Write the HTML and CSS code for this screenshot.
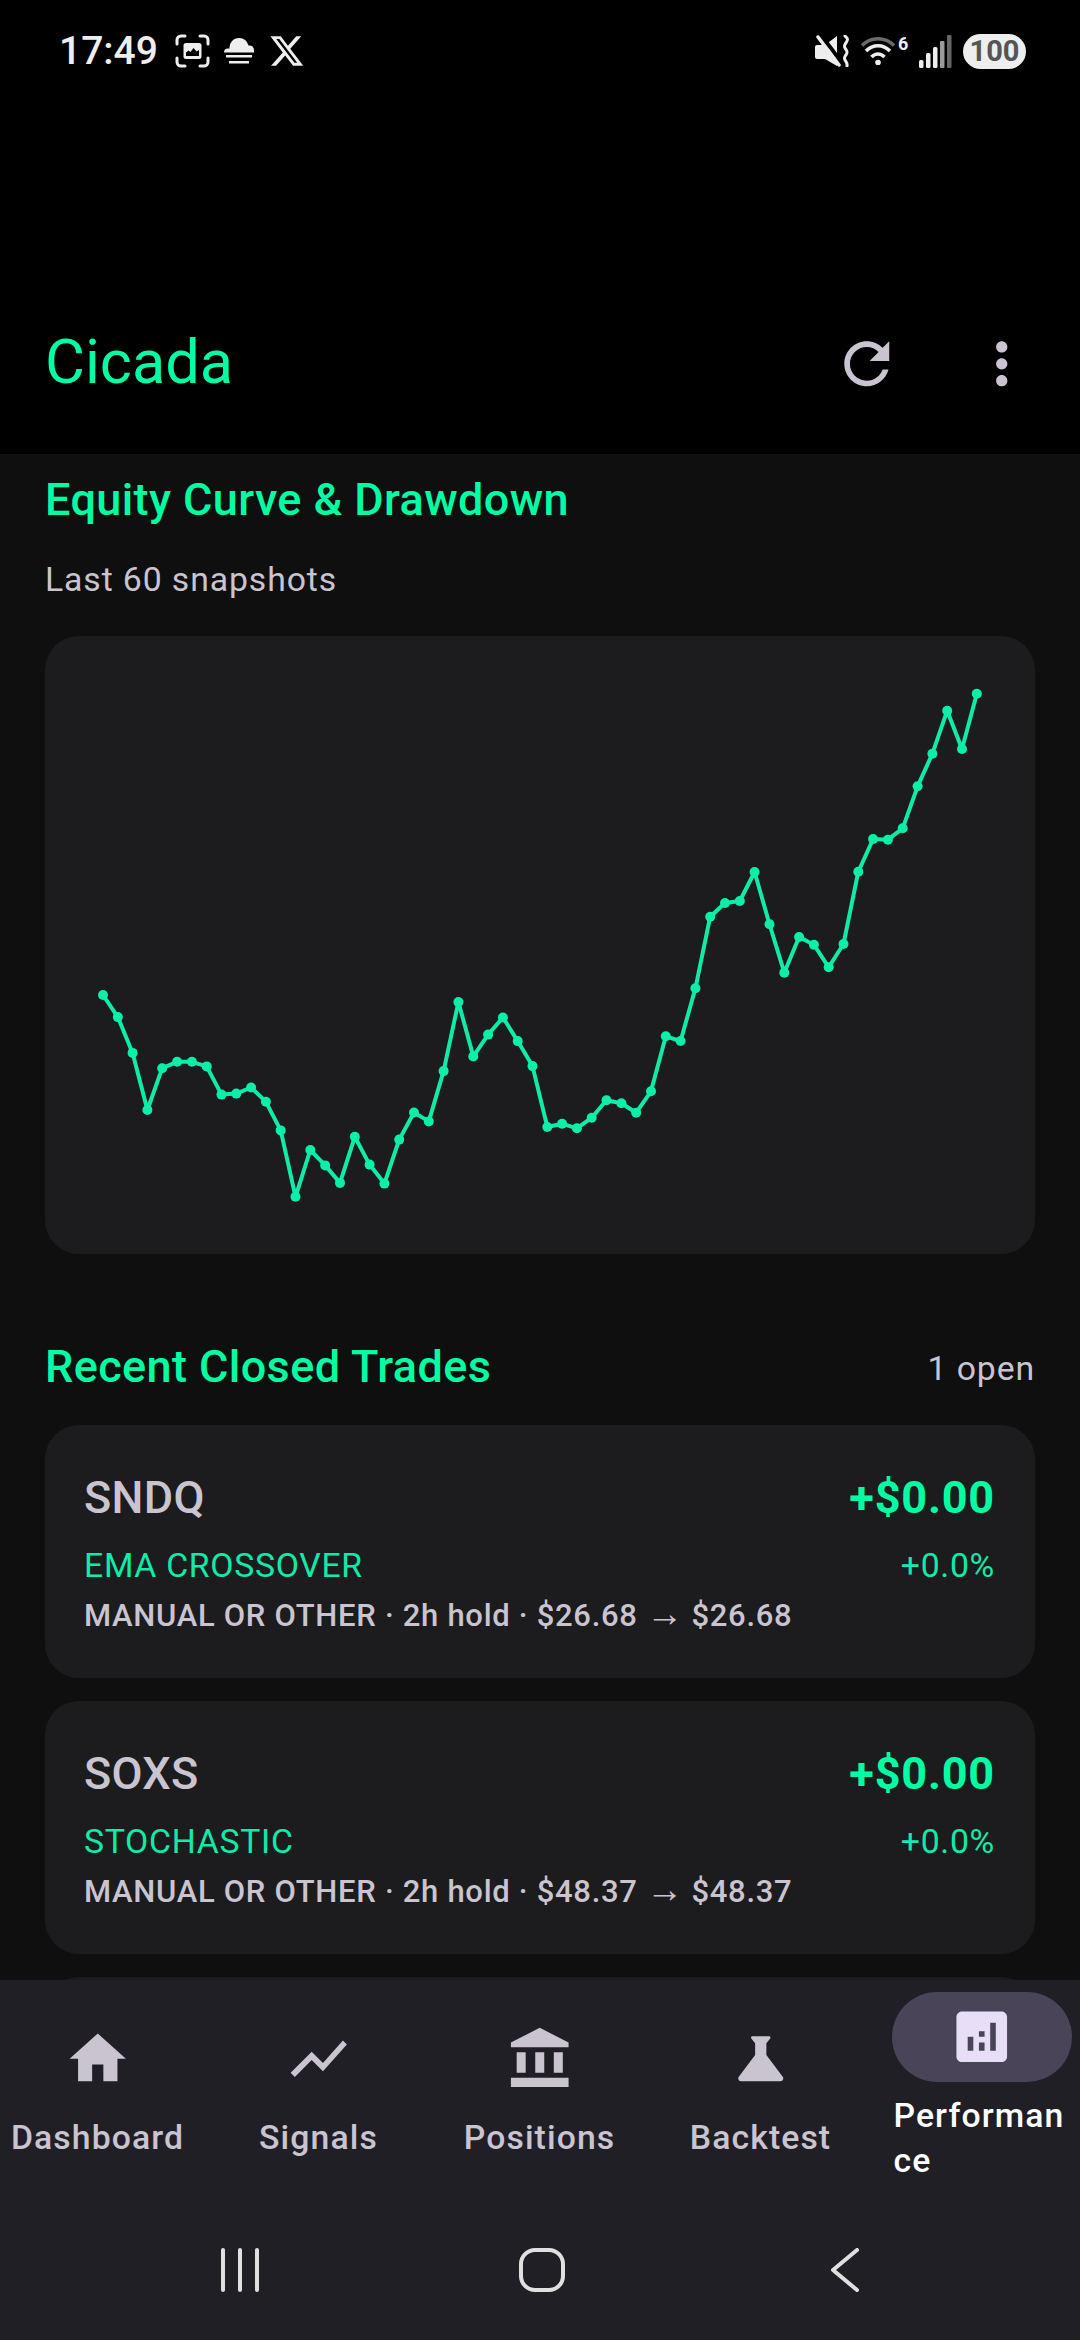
FILE: index.html
```html
<!DOCTYPE html>
<html lang="en">
<head>
<meta charset="utf-8">
<title>Cicada</title>
<link rel="stylesheet" href="styles.css">
</head>
<body>
<div class="app">
  <header class="top">
    <div class="status">
      <div class="status-left">
        <span class="time">17:49</span>
        <svg class="st-shot" viewBox="0 0 35 34"><path class="st-line" d="M2 10V6a4 4 0 0 1 4-4h4M25 2h4a4 4 0 0 1 4 4v4M33 24v4a4 4 0 0 1-4 4h-4M10 32H6a4 4 0 0 1-4-4v-4"/><path class="st-fill" fill-rule="evenodd" d="M11 9h13a2.500 2.500 0 0 1 2.500 2.500v11a2.500 2.500 0 0 1-2.500 2.500H11a2.500 2.500 0 0 1-2.500-2.500v-11A2.500 2.500 0 0 1 11 9zm0 9.500v3.500h13v-6l-2.500 1.500-3-3.500-3 4-2-1.500z"/></svg>
        <svg class="st-cloud" viewBox="0 0 30 26"><path class="st-fill" d="M0 14.500a4 4 0 0 1 4-4h1.500A9.500 9.500 0 0 1 15 0a9.500 9.500 0 0 1 9.500 7.500h1A4.500 4.500 0 0 1 30 12v2.500z"/><path class="st-fill" d="M2 17h26v2.500H2zM5 23h20v2.500H5z"/></svg>
        <svg class="st-x" viewBox="1 2 23 20"><path class="st-fill" d="M18.244 2.250h3.308l-7.227 8.260 8.502 11.240H16.170l-5.214-6.817L4.990 21.750H1.680l7.730-8.835L1.254 2.250H8.080l4.713 6.231zm-1.161 17.520h1.833L7.084 4.126H5.117z"/></svg>
      </div>
      <div class="status-right">
        <svg class="st-mute" viewBox="0 0 35 32"><path class="st-fill" d="M2 10h8L22 1v30L10 24H2a2 2 0 0 1-2-2V12a2 2 0 0 1 2-2z"/><path class="st-gap" d="M6 0l21 28"/><path class="st-slash" d="M3 2l21 28"/><path class="st-wave" d="M30 1c3 2.500 3 3.500 1.500 6s-3 3.500-1.500 6 3 3.500 1.500 6-3 3.500-1.500 6 2.500 3 2 6"/></svg>
        <div class="wifi">
          <svg class="st-wifi" viewBox="0 0 34 28"><path class="wifi-dim" d="M1 8.500C10-.5 24-.5 33 8.500"/><path class="wifi-on" d="M5 14c7-7 17-7 24 0M10.500 20c4-4 9-4 13 0"/><circle class="st-fill" cx="17" cy="25.500" r="2.800"/></svg>
          <span class="wifi-six">6</span>
        </div>
        <svg class="st-signal" viewBox="0 0 33 33"><rect class="bar-on" x="0" y="25" width="4.500" height="8" rx="1.500"/><rect class="bar-on" x="7" y="18" width="4.500" height="15" rx="1.500"/><rect class="bar-on" x="14" y="12" width="4.500" height="21" rx="1.500"/><rect class="bar-mid" x="21" y="6" width="4.500" height="27" rx="1"/><rect class="bar-dim" x="28" y="0" width="4.500" height="33" rx="1"/></svg>
        <span class="battery">100</span>
      </div>
    </div>
    <div class="appbar">
      <h1 class="brand">Cicada</h1>
      <div class="actions">
        <span class="icon-btn"><svg class="icon" viewBox="0 0 24 24"><path d="M17.650 6.350C16.200 4.900 14.210 4 12 4c-4.420 0-7.990 3.580-7.990 8s3.570 8 7.990 8c3.730 0 6.840-2.550 7.730-6h-2.080c-.82 2.330-3.040 4-5.650 4-3.310 0-6-2.690-6-6s2.690-6 6-6c1.660 0 3.140.69 4.220 1.780L13 11h7V4l-2.350 2.350z"/></svg></span>
        <span class="icon-btn"><svg class="icon" viewBox="0 0 24 24"><path d="M12 8c1.100 0 2-.9 2-2s-.9-2-2-2-2 .9-2 2 .9 2 2 2zm0 2c-1.100 0-2 .9-2 2s.9 2 2 2 2-.9 2-2-.9-2-2-2zm0 6c-1.100 0-2 .9-2 2s.9 2 2 2 2-.9 2-2-.9-2-2-2z"/></svg></span>
      </div>
    </div>
  </header>

  <main class="content">
    <h2 class="section-title">Equity Curve &amp; Drawdown</h2>
    <p class="muted sub">Last 60 snapshots</p>
    <section class="chart-card">
      <svg class="chart" viewBox="45 636 990 618">
        <defs><marker id="dot" viewBox="-7 -7 14 14" markerUnits="userSpaceOnUse" markerWidth="14" markerHeight="14"><circle class="chart-dot" r="5"/></marker></defs>
        <polyline class="chart-line" marker-start="url(#dot)" marker-mid="url(#dot)" marker-end="url(#dot)" points="103,995 117.800,1017.100 132.600,1052.900 147.400,1110 162.200,1068.200 177.100,1061.800 191.900,1061.800 206.700,1066.400 221.500,1094.600 236.300,1093.600 251.100,1087.500 265.900,1101.800 280.700,1130.400 295.500,1196.800 310.300,1150 325.200,1165.400 340,1182.900 354.800,1136.800 369.600,1164.600 384.400,1183.600 399.200,1139.600 414,1112.500 428.800,1121.400 443.600,1071.100 458.400,1002.100 473.300,1056.400 488.100,1034.600 502.900,1017.500 517.700,1041.100 532.500,1066.100 547.300,1127 562.100,1123.700 576.900,1128.300 591.700,1117.700 606.500,1100.300 621.400,1103.300 636.200,1112.700 651,1091.300 665.800,1036.300 680.600,1041 695.400,988.300 710.200,916.700 725,903 739.800,901 754.600,872 769.500,924.300 784.300,972.700 799.100,937 813.900,944.700 828.700,967.300 843.500,944 858.300,871.700 873.100,839 887.900,839.700 902.700,828.300 917.600,786.300 932.400,753.700 947.200,710.700 962,749 976.800,693.700"/>
      </svg>
    </section>

    <div class="trades-head">
      <h2 class="section-title">Recent Closed Trades</h2>
      <span class="muted open">1 open</span>
    </div>

    <div class="trades">
      <article class="trade">
        <div class="trade-row"><span class="symbol">SNDQ</span><span class="pnl">+$0.00</span></div>
        <div class="trade-row mid"><span class="strategy">EMA CROSSOVER</span><span class="strategy">+0.0%</span></div>
        <div class="detail">MANUAL OR OTHER · 2h hold · $26.68 <span class="arrow">→</span> $26.68</div>
      </article>
      <article class="trade">
        <div class="trade-row"><span class="symbol">SOXS</span><span class="pnl">+$0.00</span></div>
        <div class="trade-row mid"><span class="strategy">STOCHASTIC</span><span class="strategy">+0.0%</span></div>
        <div class="detail">MANUAL OR OTHER · 2h hold · $48.37 <span class="arrow">→</span> $48.37</div>
      </article>
      <article class="trade"></article>
    </div>
  </main>

  <footer class="bottom">
    <nav class="tabs">
      <div class="tab">
        <span class="tab-pill"><svg class="icon" viewBox="0 0 24 24"><path d="M10 20v-6h4v6h5v-8h3L12 3 2 12h3v8z"/></svg></span>
        <span class="tab-label">Dashboard</span>
      </div>
      <div class="tab">
        <span class="tab-pill"><svg class="icon" viewBox="0 0 24 24"><path d="M3.500 18.490l6-6.010 4 4L22 6.920l-1.410-1.410-7.090 7.970-4-4L2 16.990z"/></svg></span>
        <span class="tab-label">Signals</span>
      </div>
      <div class="tab">
        <span class="tab-pill"><svg class="icon" viewBox="0 0 24 24"><path d="M3.800 9.700H7V17H3.800zM10.400 9.700h3.200V17h-3.200zM17 9.700h3.200V17H17zM1.750 18.800h20.500V22H1.750zM12 1l10.250 5.200v1.700H1.750V6.200z"/></svg></span>
        <span class="tab-label">Positions</span>
      </div>
      <div class="tab">
        <span class="tab-pill"><svg class="icon" viewBox="0 0 24 24"><path d="M19.800 18.400L14 10.670V6.500l1.350-1.690C15.610 4.480 15.380 4 14.960 4H9.040c-.42 0-.65.48-.39.81L10 6.500v4.170L4.200 18.400c-.49.66-.02 1.600.8 1.600h14c.82 0 1.290-.94.8-1.600z"/></svg></span>
        <span class="tab-label">Backtest</span>
      </div>
      <div class="tab active">
        <span class="tab-pill"><svg class="icon" viewBox="0 0 24 24"><path d="M19 3H5C3.900 3 3 3.900 3 5v14c0 1.100.9 2 2 2h14c1.100 0 2-.9 2-2V5c0-1.100-.9-2-2-2zM9 17H7v-5h2v5zm4 0h-2v-3h2v3zm0-5h-2v-2h2v2zm4 5h-2V7h2v10z"/></svg></span>
        <span class="tab-label">Performance</span>
      </div>
    </nav>
    <div class="sysnav">
      <svg class="sys-recent" viewBox="0 0 40 44"><path d="M3 2v40M20 2v40M37 2v40"/></svg>
      <svg class="sys-home" viewBox="0 0 46 44"><rect x="2" y="2" width="42" height="40" rx="14"/></svg>
      <svg class="sys-back" viewBox="0 0 28 44"><path d="M26 2L2 22l24 20"/></svg>
    </div>
  </footer>
</div>
</body>
</html>
```
FILE: styles.css
```css
* { box-sizing: border-box; }
html, body { margin: 0; padding: 0; background: #000; }
body { font-family: Roboto, "Liberation Sans", sans-serif; }
h1, h2, p { margin: 0; }

.app { width: 1080px; height: 2340px; display: flex; flex-direction: column; overflow: hidden; }

/* header */
.top { height: 454px; background: #000; display: flex; flex-direction: column; justify-content: space-between; flex: none; }
.status { height: 102px; display: flex; justify-content: space-between; align-items: center; padding: 0 54px 0 59px; }
.status-left, .status-right { display: flex; align-items: center; }
.time { font-size: 39px; font-weight: 500; color: #eee; width: 97px; margin-right: 19px; }
.st-fill { fill: #eee; }
.st-line { fill: none; stroke: #eee; stroke-width: 3; stroke-linecap: round; }
.st-shot { width: 35px; height: 34px; margin-right: 14px; }
.st-cloud { width: 30px; height: 26px; margin-right: 16px; }
.st-x { width: 35px; height: 32px; }
.st-mute { width: 35px; height: 32px; margin-right: 11px; }
.st-gap { stroke: #000; stroke-width: 4; fill: none; }
.st-slash { stroke: #eee; stroke-width: 3.500; stroke-linecap: round; fill: none; }
.st-wave { stroke: #eee; stroke-width: 3; stroke-linecap: round; stroke-linejoin: round; fill: none; }
.wifi { display: flex; align-items: flex-start; margin-right: 11px; }
.st-wifi { width: 34px; height: 28px; }
.wifi-dim { fill: none; stroke: #6a6a6a; stroke-width: 3.500; }
.wifi-on { fill: none; stroke: #eee; stroke-width: 3.500; }
.wifi-six { font-size: 18px; font-weight: 700; line-height: 14px; color: #eee; margin-left: 3px; width: 10px; }
.st-signal { width: 33px; height: 33px; margin-right: 11px; }
.bar-on { fill: #eee; }
.bar-mid { fill: #9a9a9a; }
.bar-dim { fill: #666; }
.battery { width: 63px; height: 35px; border-radius: 18px; background: #eee; color: #555; font-size: 29px; font-weight: 700; line-height: 35px; text-align: center; }

.appbar { height: 180px; display: flex; align-items: center; justify-content: space-between; padding: 0 11px 0 45px; }
.brand { font-size: 61.300px; font-weight: 400; color: #00ffa3; line-height: 80px; position: relative; top: -2px; }
.actions { display: flex; }
.icon-btn { width: 135px; height: 135px; display: flex; align-items: center; justify-content: center; }
.icon { width: 67.500px; height: 67.500px; fill: #cac4d0; display: block; }

/* content */
.content { flex: none; height: 1526px; background: #0f0f0f; padding: 16px 45px 0; overflow: hidden; }
.section-title { font-size: 45px; font-weight: 500; letter-spacing: 0.400px; line-height: 60px; color: #00ffa3; }
.muted { font-size: 33.750px; color: #cac4d0; letter-spacing: 0.900px; line-height: 42px; }
.sub { margin-top: 29px; }
.open { margin-top: 3px; }
.chart-card { margin-top: 35px; height: 618px; background: #1c1c1e; border-radius: 34px; }
.chart { display: block; width: 990px; height: 618px; }
.chart-line { fill: none; stroke: #10eba8; stroke-width: 4; stroke-linejoin: round; }
.chart-dot { fill: #0af0a8; }

.trades-head { margin-top: 83px; height: 60px; display: flex; justify-content: space-between; align-items: center; }
.trades { margin-top: 28px; display: flex; flex-direction: column; gap: 23px; }
.trade { height: 253px; flex: none; background: #1c1c1e; border-radius: 34px; padding: 42px 40px 0 39px; }
.trade-row { display: flex; justify-content: space-between; align-items: center; height: 60px; }
.mid { height: 44px; margin-top: 16px; }
.symbol { font-size: 45px; font-weight: 500; letter-spacing: 0.300px; color: #cac4d0; }
.pnl { font-size: 45px; font-weight: 700; letter-spacing: 0.800px; color: #00ffa3; }
.strategy { font-size: 33.750px; letter-spacing: 0.700px; color: #10eba8; }
.detail { font-size: 31px; font-weight: 500; color: #cac4d0; line-height: 40px; margin-top: 9px; letter-spacing: 0.700px; }
.arrow { font-family: "Liberation Sans", sans-serif; font-size: 37px; font-weight: 400; letter-spacing: 0; line-height: 30px; }

/* bottom */
.bottom { flex: none; height: 360px; background: #211f26; position: relative; }
.tabs { display: grid; grid-template-columns: repeat(5, 221px); height: 214px; margin-left: -13px; }
.tab { display: flex; flex-direction: column; align-items: center; justify-content: center; gap: 11px; }
.tab-pill { width: 180px; height: 90px; border-radius: 45px; display: flex; align-items: center; justify-content: center; flex: none; }
.tab-label { font-size: 33.750px; font-weight: 500; line-height: 45px; letter-spacing: 1.100px; color: #cac4d0; white-space: nowrap; }
.active .tab-pill { background: #4a4458; }
.active .icon { fill: #e8def8; }
.active .tab-label { color: #fff; white-space: normal; width: 180px; word-break: break-all; padding-left: 2px; }

.sysnav { height: 140px; margin-top: 6px; display: grid; grid-template-columns: repeat(3, auto); justify-content: start; align-items: center; }
.sysnav svg { fill: none; stroke: #e0e0e0; stroke-width: 4; stroke-linecap: round; stroke-linejoin: round; display: block; }
.sys-recent { width: 40px; height: 44px; margin-left: 220px; }
.sys-home { width: 46px; height: 44px; margin-left: 259px; }
.sys-back { width: 28px; height: 44px; margin-left: 266px; }
```
